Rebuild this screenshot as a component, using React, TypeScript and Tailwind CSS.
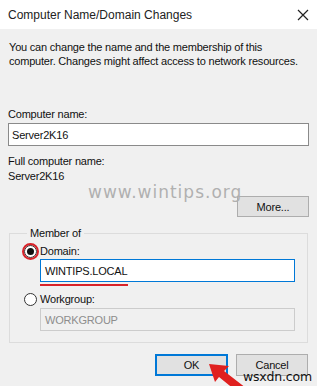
import React from "react";

const font = { fontFamily: '"Liberation Sans", Arial, sans-serif' };

function Radio({ checked }: { checked?: boolean }) {
  return (
    <span className="relative flex h-[13px] w-[13px] items-center justify-center rounded-full border border-[#333] bg-white">
      {checked && <span className="h-[7px] w-[7px] rounded-full bg-[#111]" />}
    </span>
  );
}

export default function App() {
  return (
    <div className="relative h-[386px] w-[317px] overflow-hidden bg-[#f0f0f0] text-[11px] leading-[14px] tracking-[-0.2px] text-[#111]" style={font}>
      {/* title bar */}
      <div className="flex h-[29px] items-center justify-between bg-white pl-[8px] pr-[7px]">
        <span className="whitespace-nowrap text-[12px] leading-[16px] tracking-normal text-[#222]">Computer Name/Domain Changes</span>
        <svg width="12" height="12" viewBox="0 0 12 12" className="mr-[1px]">
          <path d="M1 1 L11 11 M11 1 L1 11" stroke="#222" strokeWidth="1.2" />
        </svg>
      </div>

      <div className="flex flex-col px-[8px]">
        <p className="mt-[11px] whitespace-nowrap pl-[1px]">
          You can change the name and the membership of this
          <br />
          computer. Changes might affect access to network resources.
        </p>

        <div className="mt-[39px]">Computer name:</div>
        <div className="mt-[2px] flex h-[23px] items-center border border-[#8a8a8a] bg-white pl-[3px]">
          Server2K16
        </div>

        <div className="mt-[8px]">Full computer name:</div>
        <div className="mt-[1px]">Server2K16</div>

        <div className="mt-[13px] flex justify-end">
          <button className="flex h-[21px] w-[72px] items-center justify-center border border-[#adadad] bg-[#e1e1e1]">
            More...
          </button>
        </div>

        <fieldset className="mt-[9px] ml-[1px] mr-[1px] h-[117px] border border-[#dcdcdc] pl-[12px] pr-[12px]">
          <legend className="ml-[5px] px-[3px]">Member of</legend>
          <div className="mt-[4px] flex items-center gap-[3px] pl-[2px]">
            <Radio checked />
            <span>Domain:</span>
          </div>
          <div className="mt-[1px] ml-[18px] flex h-[23px] items-center border border-[#0078d7] bg-white pl-[4px]">
            WINTIPS.LOCAL
          </div>
          <div className="mt-[10px] flex items-center gap-[3px] pl-[2px]">
            <Radio />
            <span>Workgroup:</span>
          </div>
          <div className="mt-[2px] ml-[18px] flex h-[23px] items-center border border-[#cccccc] bg-[#f0f0f0] pl-[4px] text-[#8d8d8d]">
            WORKGROUP
          </div>
        </fieldset>

        <div className="mt-[11px] flex justify-end gap-[8px] pr-[1px]">
          <button className="flex h-[22px] w-[73px] items-center justify-center border-2 border-[#0078d7] bg-[#e1e1e1]">
            OK
          </button>
          <button className="flex h-[22px] w-[72px] items-center justify-center border border-[#adadad] bg-[#e1e1e1]">
            Cancel
          </button>
        </div>
      </div>

      {/* overlays */}
      <div className="absolute left-[88px] top-[182px] text-[17px] leading-[20px] tracking-[1px] text-[#b0b0b0]" style={{ fontFamily: '"DejaVu Sans", sans-serif' }}>
        www.wintips.org
      </div>
      <div className="absolute left-[22px] top-[243px] h-[17px] w-[17px] rounded-full border-2 border-[#d8232a]" />
      <div className="absolute left-[40px] top-[284px] h-[2px] w-[88px] bg-[#d8232a]" />
      <div className="absolute left-[243px] top-[369px] text-[12.5px] leading-[15px] text-[#111]" style={{ fontFamily: '"DejaVu Sans", sans-serif' }}>
        wsxdn.com
      </div>
      <svg className="absolute left-0 top-0" width="317" height="386" viewBox="0 0 317 386">
        <path d="M209 364 L229 366 L224 371 L246 388 L240 394 L219 377 L215 382 Z" fill="#e0201f" />
      </svg>
    </div>
  );
}
